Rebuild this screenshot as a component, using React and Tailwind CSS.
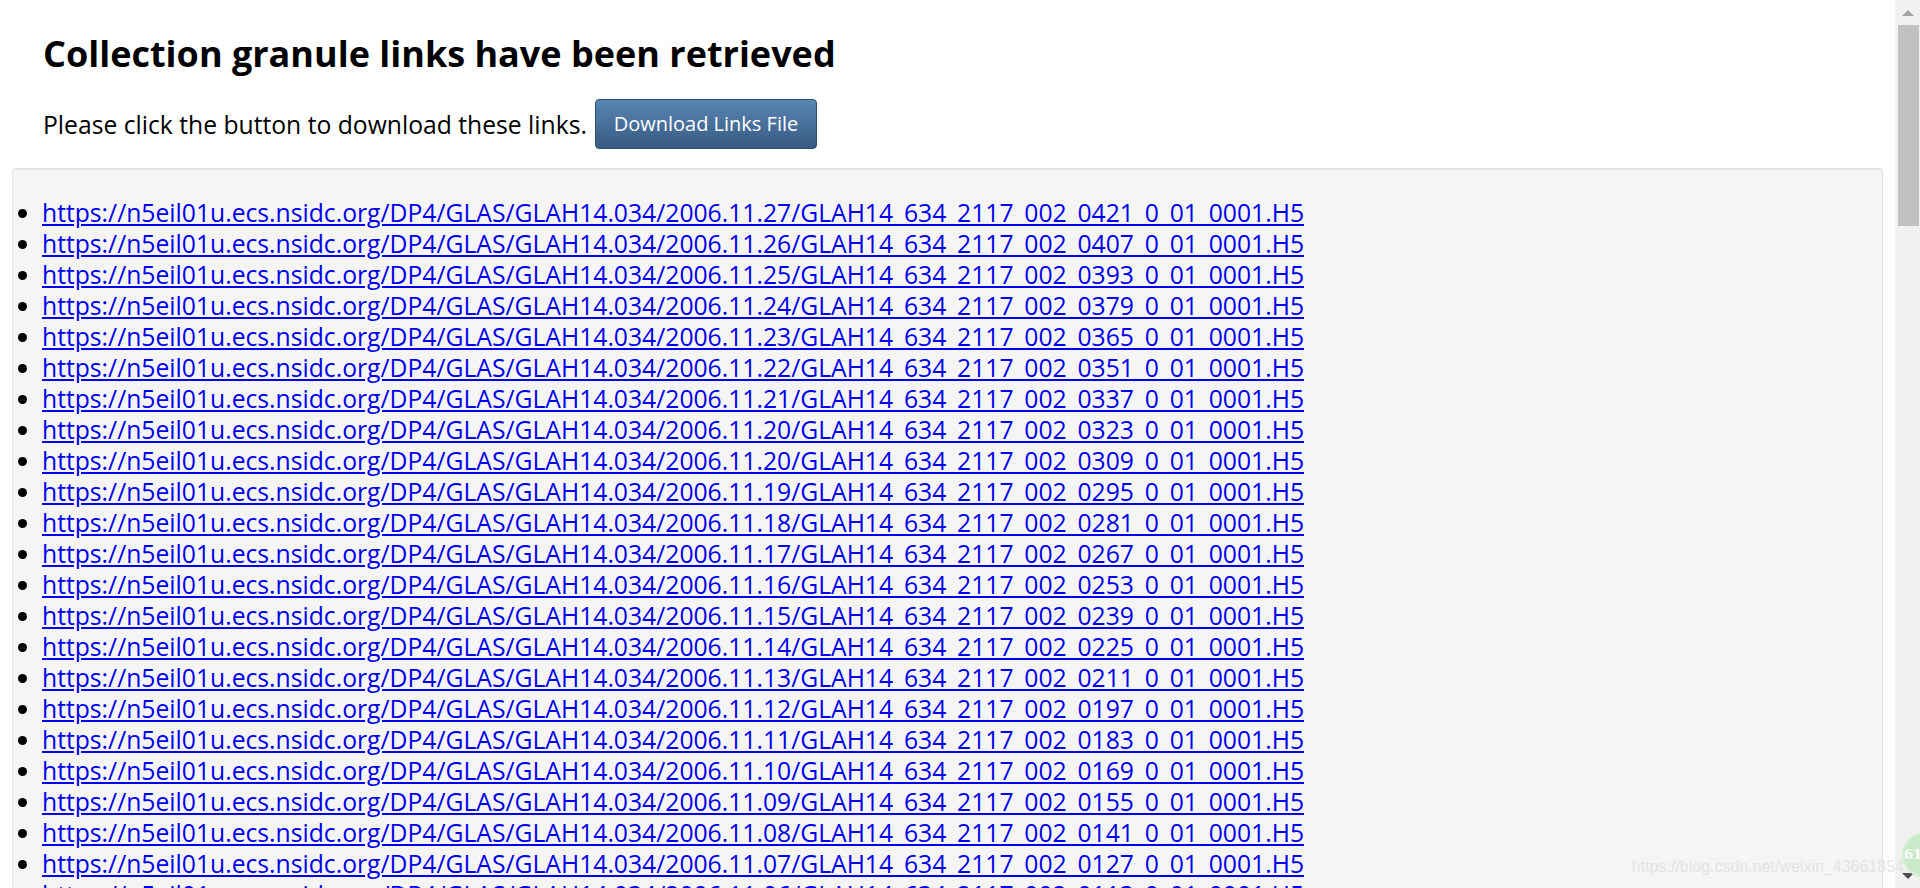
import React from 'react';

const links = [
    ['27', '0421'], ['26', '0407'], ['25', '0393'], ['24', '0379'], ['23', '0365'],
    ['22', '0351'], ['21', '0337'], ['20', '0323'], ['20', '0309'], ['19', '0295'],
    ['18', '0281'], ['17', '0267'], ['16', '0253'], ['15', '0239'], ['14', '0225'],
    ['13', '0211'], ['12', '0197'], ['11', '0183'], ['10', '0169'], ['09', '0155'],
    ['08', '0141'], ['07', '0127'], ['06', '0113'], ['05', '0099'], ['04', '0085'],
].map(([day, orbit]) =>
    `https://n5eil01u.ecs.nsidc.org/DP4/GLAS/GLAH14.034/2006.11.${day}/GLAH14_634_2117_002_${orbit}_0_01_0001.H5`
);

// Fake window scrollbar, page itself is clipped to the viewport
function Scrollbar() {
    return (
        <div className="flex w-[25px] shrink-0 flex-col items-center bg-[#f1f1f1]">
            <div className="flex h-[25px] w-full items-center justify-center">
                <div className="h-0 w-0 border-x-[6px] border-b-[6px] border-x-transparent border-b-[#a3a3a3]"></div>
            </div>
            <div className="ml-[1px] h-[201px] w-[21px] bg-[#c1c1c1]"></div>
            <div className="flex-1"></div>
            <div className="flex h-[25px] w-full items-center justify-center">
                <div className="h-0 w-0 border-x-[6px] border-t-[6px] border-x-transparent border-t-[#505050]"></div>
            </div>
        </div>
    );
}

export default function App() {
    return (
        <div className="relative flex h-[888px] overflow-hidden bg-white font-['Open_Sans',sans-serif] text-black">
            <div className="min-w-0 flex-1 px-[12px]">
                <div className="pl-[31px] pt-[30px]">
                    <h1 className="text-[36px] font-bold leading-[48px]">
                        Collection granule links have been retrieved
                    </h1>
                    <div className="mt-[21px] flex items-center gap-[8px]">
                        <p className="text-[24.7px] leading-[31px]">Please click the button to download these links.</p>
                        <button className="h-[50px] w-[222px] rounded-[4px] border border-[#2f4f73] bg-gradient-to-b from-[#5a86b3] to-[#375b83] text-[20px] text-white">
                            Download Links File
                        </button>
                    </div>
                </div>

                <div className="mt-[19px] rounded-[4px] border border-[#e3e3e3] bg-[#f5f5f5] pt-[28px] shadow-[inset_0_1px_1px_rgba(0,0,0,0.05)]">
                    <ul className="list-disc pl-[29px] text-[24.7px] leading-[31px]">
                        {links.map((url, i) => (
                            <li key={i}>
                                <a href={url} className="text-[#0000ee] underline">
                                    {url}
                                </a>
                            </li>
                        ))}
                    </ul>
                </div>
            </div>

            <Scrollbar />

            {/* csdn watermark overlay */}
            <div className="absolute bottom-[9px] right-[16px] font-['Liberation_Sans',sans-serif] text-[16px] text-[#e3e3e3]">
                https://blog.csdn.net/weixin_43661854
            </div>
            <div className="absolute bottom-[10px] right-[-28px] flex h-[46px] w-[46px] items-center justify-center rounded-full border-2 border-[#d6efd6] bg-[#c8eac8]">
                <span className="pr-[24px] font-['DejaVu_Serif',serif] text-[13px] font-bold text-white">61</span>
            </div>
        </div>
    );
}
